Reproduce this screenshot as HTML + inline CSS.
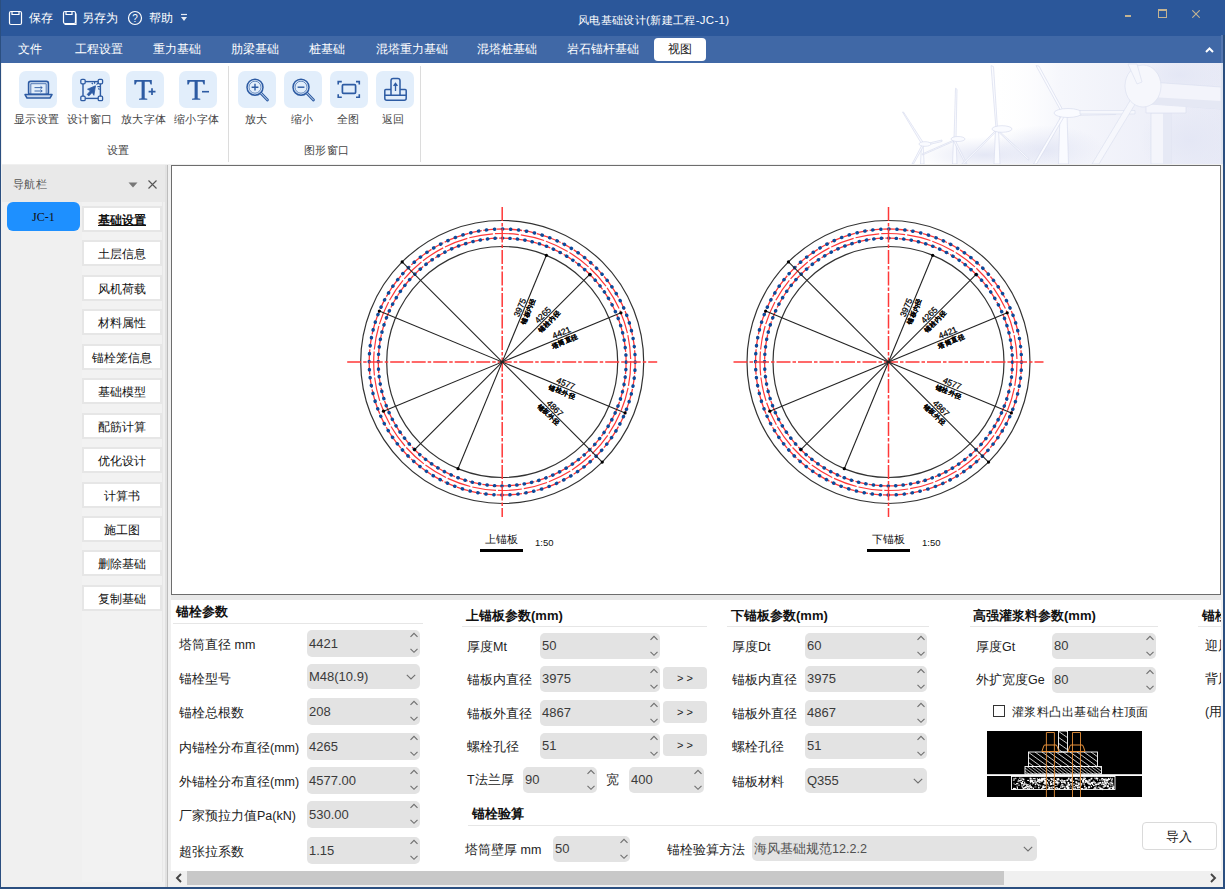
<!DOCTYPE html>
<html><head><meta charset="utf-8">
<style>
*{box-sizing:border-box;margin:0;padding:0}
html,body{width:1225px;height:889px;overflow:hidden;background:#f0f0f0;font-family:"Liberation Sans",sans-serif;position:relative}
.a{position:absolute}
.t{position:absolute;white-space:nowrap;line-height:1}
#title{left:0;top:0;width:1225px;height:36px;background:#2b579a}
#menu{left:0;top:36px;width:1225px;height:27px;background:#4068a6}
#ribbon{left:2px;top:63px;width:1221px;height:101px;background:#fff}
.mt{color:#fff;font-size:11.6px;top:43px}
.rbox{position:absolute;top:71px;width:38px;height:37px;background:#e2eefb;border-radius:7px}
.rl{position:absolute;top:114px;font-size:11.4px;letter-spacing:.3px;color:#444;white-space:nowrap;line-height:1}
#nav{left:2px;top:165px;width:166px;height:722px;background:#f0f0f0}
.nb{position:absolute;left:82px;width:80px;height:26px;background:#fff;border:2px solid #e6e6e6;font-size:12px;font-weight:500;color:#111;text-align:center;line-height:24px}
#canvas{left:171px;top:165px;width:1050px;height:430px;background:#fff;border:1px solid #6d6d6d}
#bottom{left:171px;top:600px;width:1050px;height:271px;background:#fff}
.lb{position:absolute;font-size:12.5px;color:#222;white-space:nowrap;line-height:1}
.hd{position:absolute;font-size:13px;font-weight:bold;color:#111;white-space:nowrap;line-height:1}
.sep{position:absolute;height:1px;background:#e6e6e6}
.sp{position:absolute;height:27px;background:#e3e3e3;border-radius:5px;font-size:13px;color:#3a3a3a;line-height:27px;padding-left:2px;white-space:nowrap}
.sp svg{position:absolute;right:5px;top:4px}
.btn{position:absolute;height:22px;background:#e3e3e3;border-radius:4px;font-size:11px;color:#222;text-align:center;line-height:22px}
</style></head><body>
<div id="title" class="a">
<svg class="a" style="left:8px;top:10px" width="16" height="16" viewBox="0 0 16 16"><rect x="1.5" y="1.5" width="12" height="13" rx="1.5" fill="none" stroke="#fff" stroke-width="1.2"/><path d="M4 1.5v3h7v-3" fill="none" stroke="#fff" stroke-width="1.2"/></svg>
<div class="t" style="left:29px;top:12px;font-size:12px;color:#fff">保存</div>
<svg class="a" style="left:62px;top:10px" width="16" height="16" viewBox="0 0 16 16"><rect x="1.5" y="1.5" width="12" height="12" rx="1.5" fill="none" stroke="#fff" stroke-width="1.2"/><path d="M4 1.5v3h6v-3M2.5 14.5h11.5v-11" fill="none" stroke="#fff" stroke-width="1.2"/></svg>
<div class="t" style="left:82px;top:12px;font-size:12px;color:#fff">另存为</div>
<svg class="a" style="left:127px;top:10px" width="16" height="16" viewBox="0 0 16 16"><circle cx="8" cy="8" r="6.5" fill="none" stroke="#fff" stroke-width="1.2"/><text x="8" y="11.5" font-size="10" text-anchor="middle" fill="#fff" font-family="Liberation Sans">?</text></svg>
<div class="t" style="left:149px;top:12px;font-size:12px;color:#fff">帮助</div>
<svg class="a" style="left:180px;top:13px" width="8" height="9" viewBox="0 0 8 9"><path d="M1 1.5h6" stroke="#e8ecf4" stroke-width="1.2"/><path d="M1 4h6L4 8z" fill="#e8ecf4"/></svg>
<div class="t" style="left:578px;top:15px;font-size:11.4px;letter-spacing:0.35px;color:#fff">风电基础设计(新建工程-JC-1)</div>
<div class="a" style="left:1125px;top:15px;width:6px;height:2px;background:#c4b391"></div>
<div class="a" style="left:1158px;top:9px;width:9px;height:9px;border:1px solid #c4b391;border-top-width:2px"></div>
<svg class="a" style="left:1192px;top:10px" width="8" height="8" viewBox="0 0 8 8"><path d="M0.3 0.3l7.4 7.4M7.7 0.3l-7.4 7.4" stroke="#c4b391" stroke-width="1.1"/></svg>
</div>
<div id="menu" class="a">
<div class="t mt" style="left:18px;top:7px">文件</div>
<div class="t mt" style="left:75px;top:7px">工程设置</div>
<div class="t mt" style="left:153px;top:7px">重力基础</div>
<div class="t mt" style="left:231px;top:7px">肋梁基础</div>
<div class="t mt" style="left:309px;top:7px">桩基础</div>
<div class="t mt" style="left:376px;top:7px">混塔重力基础</div>
<div class="t mt" style="left:477px;top:7px">混塔桩基础</div>
<div class="t mt" style="left:567px;top:7px">岩石锚杆基础</div>
<div class="a" style="left:654px;top:2px;width:52px;height:23px;background:#fff;border-radius:4px"></div>
<div class="t mt" style="left:668px;top:7px;color:#222">视图</div>
<svg class="a" style="left:1205px;top:11px" width="9" height="6" viewBox="0 0 9 6"><path d="M1 5l3.5-3.5 3.5 3.5" fill="none" stroke="#fff" stroke-width="2"/></svg>
</div>
<div id="ribbon" class="a"></div>
<svg class="a" style="left:880px;top:63px" width="343" height="101" viewBox="880 63 343 101">
 <defs>
  <linearGradient id="bg1" x1="0" y1="0" x2="1" y2="0"><stop offset="0" stop-color="#fff" stop-opacity="0"/><stop offset="0.3" stop-color="#f6f7fc"/><stop offset="1" stop-color="#e8eaf6"/></linearGradient>
  <radialGradient id="cl" cx="0.5" cy="0.5" r="0.5"><stop offset="0" stop-color="#e4e7f5"/><stop offset="1" stop-color="#e4e7f5" stop-opacity="0"/></radialGradient>
 </defs>
 <rect x="990" y="63" width="233" height="101" fill="url(#bg1)"/>
 <ellipse cx="1045" cy="150" rx="60" ry="25" fill="url(#cl)"/>
 <ellipse cx="1190" cy="140" rx="50" ry="40" fill="url(#cl)"/>
 <ellipse cx="1180" cy="75" rx="45" ry="22" fill="url(#cl)"/>
 <ellipse cx="985" cy="155" rx="70" ry="18" fill="url(#cl)"/>
 <g fill="#fafbff" stroke="#d9ddee" stroke-width="0.7">
  <path d="M921.5 144l1.6 0 1 20h-3.6z"/>
  <path d="M922 144.5L902.5 112l1 0 20 31z M922.5 144.5L942 140l0 1.5-19 4.5z M922 145L912 164h1.5l10-18z"/>
  <ellipse cx="925" cy="144" rx="6" ry="2.3"/>
  <path d="M953.5 139h2.5l1 25h-4.5z"/>
  <path d="M954 139L955.5 88.2l1.5 1-1 50z M954 140L922 154l.5 1 32-14z M955 140L967 164h-1.5l-12-23z"/>
  <ellipse cx="958" cy="139" rx="7" ry="2.5"/>
  <path d="M995.5 129h3l1.5 35h-6z"/>
  <path d="M996 129L991 65.6l2.5 1 4 62z M996 130L961.7 164h2l33-33z M998 130L1029 158.6l-.5 1.5-31-29z"/>
  <ellipse cx="1002" cy="129" rx="10" ry="3.3"/>
  <path d="M1060 113.5h7l1.5 50.5h-10z"/>
  <path d="M1062 113L1036 65.6l3 .5 25 46z M1064 112L1116.6 112l-1 2.5-51 1z M1062 115L1033.5 164h3l28-48z"/>
  <ellipse cx="1068" cy="113" rx="14" ry="4.5"/>
 </g>
 <g stroke="#d9ddee" stroke-width="0.6">
  <path d="M1080 110.5h55v3.5h-55z" fill="#f6f7fc"/>
  <path d="M1151 113h20v51h-20z" fill="#f4f5fb"/><path d="M1163 113h8v51h-8z" fill="#e6e9f5" stroke="none"/>
  <path d="M1146 101h40v12h-40z" fill="#f5f6fc"/>
  <path d="M1131 99l6 2-38 63h-7z" fill="#f6f7fc"/>
  <path d="M1150 82l71 5v22l-71-5z" fill="#f3f4fb"/>
  <path d="M1150 97l71 4v8l-71-5z" fill="#e5e8f4" stroke="none"/>
  <ellipse cx="1143" cy="86" rx="18" ry="21" fill="#f6f7fc"/>
  <path d="M1128 64l9 20 5-2-5-18z" fill="#f6f7fc"/>
 </g>
 <rect x="1221" y="63" width="2" height="101" fill="#dde3ef"/>
</svg>
<div class="rbox" style="left:19px"></div>
<div class="rbox" style="left:72px"></div>
<div class="rbox" style="left:126px"></div>
<div class="rbox" style="left:179px"></div>
<div class="rbox" style="left:238px"></div>
<div class="rbox" style="left:284px"></div>
<div class="rbox" style="left:330px"></div>
<div class="rbox" style="left:376px"></div>
<svg class="a" style="left:19px;top:71px" width="38" height="37" viewBox="0 0 38 37">
 <rect x="9.6" y="10.4" width="19.8" height="13" rx="2" fill="none" stroke="#2d5ba3" stroke-width="1.6"/>
 <path d="M11.8 23v-10.3h15.4v10.3" fill="none" stroke="#2d5ba3" stroke-width="0.8"/>
 <path d="M6 23.6h27l-2 3.4h-23z" fill="#c9d8ee" stroke="#2d5ba3" stroke-width="1.5" stroke-linejoin="round"/>
 <path d="M15.5 16.6h7.5M15.5 20h7.5" stroke="#2d5ba3" stroke-width="0.9"/>
 <path d="M21.5 15.3l1.8 1.3-1.8 1.3M21.5 18.7l1.8 1.3-1.8 1.3" fill="none" stroke="#2d5ba3" stroke-width="0.8"/>
</svg>
<svg class="a" style="left:72px;top:71px" width="38" height="37" viewBox="0 0 38 37">
 <rect x="11" y="10.6" width="17.4" height="16.8" fill="none" stroke="#2d5ba3" stroke-width="1.4"/>
 <g fill="#e2eefb" stroke="#2d5ba3" stroke-width="1.3"><rect x="8.8" y="8.4" width="4.4" height="4.4" rx="1.2"/><rect x="26.2" y="8.4" width="4.4" height="4.4" rx="1.2"/><rect x="8.8" y="25.2" width="4.4" height="4.4" rx="1.2"/><rect x="26.2" y="25.2" width="4.4" height="4.4" rx="1.2"/></g>
 <path d="M23.5 14.8L15.5 18.2l3 1.6-3.3 3.6 1.6 1.5 3.4-3.5 1.7 2.9z" fill="#2d5ba3" stroke="#2d5ba3" stroke-width="0.8" stroke-linejoin="round"/>
 <path d="M24.5 13.6l2-2M22.6 12.8v-2.6M25.4 15.6h2.6M20.8 13.2l-1-1.4M26.2 17.4l1.4 1" stroke="#2d5ba3" stroke-width="1.2"/>
</svg>
<svg class="a" style="left:126px;top:71px" width="38" height="37" viewBox="0 0 38 37">
 <path d="M8.3 9h17.5v4.6h-1.2l-1.1-2.8h-4.8v16.4l2.6.6v1h-8.3v-1l2.6-.6v-16.4h-4.8l-1.1 2.8h-1.4z" fill="#2d5ba3"/>
 <path d="M22.6 20.6h6.9M26 17.2v6.8" stroke="#2d5ba3" stroke-width="1.7"/>
</svg>
<svg class="a" style="left:179px;top:71px" width="38" height="37" viewBox="0 0 38 37">
 <path d="M8.3 9h17.5v4.6h-1.2l-1.1-2.8h-4.8v16.4l2.6.6v1h-8.3v-1l2.6-.6v-16.4h-4.8l-1.1 2.8h-1.4z" fill="#2d5ba3"/>
 <path d="M23 20.7h7" stroke="#2d5ba3" stroke-width="1.6"/>
</svg>
<svg class="a" style="left:238px;top:71px" width="38" height="37" viewBox="0 0 38 37">
 <circle cx="17" cy="16.2" r="8" fill="none" stroke="#2d5ba3" stroke-width="1.5"/>
 <circle cx="17" cy="16.2" r="6" fill="none" stroke="#2d5ba3" stroke-width="0.7"/>
 <path d="M23 22.2l6.5 6.8" stroke="#2d5ba3" stroke-width="2.8" stroke-linecap="round"/>
 <path d="M23 22.2l6.5 6.8" stroke="#e2eefb" stroke-width="0.9" stroke-linecap="round"/>
 <path d="M13.6 16.2h6.8M17 12.8v6.8" stroke="#2d5ba3" stroke-width="1.4"/>
</svg>
<svg class="a" style="left:284px;top:71px" width="38" height="37" viewBox="0 0 38 37">
 <circle cx="17" cy="16.2" r="8" fill="none" stroke="#2d5ba3" stroke-width="1.5"/>
 <circle cx="17" cy="16.2" r="6" fill="none" stroke="#2d5ba3" stroke-width="0.7"/>
 <path d="M23 22.2l6.5 6.8" stroke="#2d5ba3" stroke-width="2.8" stroke-linecap="round"/>
 <path d="M23 22.2l6.5 6.8" stroke="#e2eefb" stroke-width="0.9" stroke-linecap="round"/>
 <path d="M13.6 16.2h6.8" stroke="#2d5ba3" stroke-width="1.4"/>
</svg>
<svg class="a" style="left:330px;top:71px" width="38" height="37" viewBox="0 0 38 37">
 <path d="M8.2 13.6v-3h3.6M26 10.6h3.3v3M29.3 23.3v3h-3.3M11.8 26.3h-3.6v-3" fill="none" stroke="#2d5ba3" stroke-width="1.6"/>
 <rect x="12.4" y="13.6" width="13.2" height="8.8" rx="1.2" fill="none" stroke="#2d5ba3" stroke-width="1.7"/>
</svg>
<svg class="a" style="left:376px;top:71px" width="38" height="37" viewBox="0 0 38 37">
 <path d="M15 24v-14.2a2.2 2.2 0 0 1 2.2-2.2h4.6a2.2 2.2 0 0 1 2.2 2.2v14.2" fill="none" stroke="#2d5ba3" stroke-width="1.5"/>
 <path d="M15 18.5h-5.2a1 1 0 0 0-1 1v7.8a2 2 0 0 0 2 2h17.4a2 2 0 0 0 2-2v-7.8a1 1 0 0 0-1-1h-5.2M9 24.2h21" fill="none" stroke="#2d5ba3" stroke-width="1.5"/>
 <path d="M19.5 20v-7.5M17.6 14.8l1.9-2.5 1.9 2.5" fill="#2d5ba3" stroke="#2d5ba3" stroke-width="1.3"/>
</svg>
<div class="rl" style="left:14px">显示设置</div>
<div class="rl" style="left:67px">设计窗口</div>
<div class="rl" style="left:121px">放大字体</div>
<div class="rl" style="left:174px">缩小字体</div>
<div class="rl" style="left:245px">放大</div>
<div class="rl" style="left:291px">缩小</div>
<div class="rl" style="left:337px">全图</div>
<div class="rl" style="left:382px">返回</div>
<div class="rl" style="left:107px;top:145px">设置</div>
<div class="rl" style="left:304px;top:145px">图形窗口</div>
<div class="a" style="left:228px;top:66px;width:1px;height:96px;background:#dcdcdc"></div>
<div class="a" style="left:420px;top:66px;width:1px;height:96px;background:#dcdcdc"></div>
<div id="nav" class="a"></div>
<div class="a" style="left:2px;top:165px;width:166px;height:37px;background:#e9e9e9"></div>
<div class="t" style="left:13px;top:179px;font-size:11.4px;letter-spacing:.3px;color:#555">导航栏</div>
<svg class="a" style="left:128px;top:182px" width="10" height="6" viewBox="0 0 10 6"><path d="M0.5 0.5h9L5 5.5z" fill="#777"/></svg>
<svg class="a" style="left:148px;top:180px" width="9" height="9" viewBox="0 0 9 9"><path d="M0.5 0.5l8 8M8.5 0.5l-8 8" stroke="#555" stroke-width="1.1"/></svg>
<div class="a" style="left:82px;top:202px;width:81px;height:680px;background:#f2f2f2;border-right:1px solid #e8e8e8"></div>
<div class="a" style="left:7px;top:202px;width:73px;height:29px;background:#1e90ff;border-radius:6px"></div>
<div class="t" style="left:32px;top:211px;font-size:12px;color:#111;font-family:'Liberation Serif',serif">JC-1</div>
<div class="a" style="left:165px;top:165px;width:2px;height:722px;background:#e2e2e2"></div>
<div class="a" style="left:167px;top:165px;width:1px;height:722px;background:#bdbdbd"></div>
<div class="nb" style="top:206px;font-weight:bold;text-decoration:underline;">基础设置</div>
<div class="nb" style="top:240px;">土层信息</div>
<div class="nb" style="top:275px;">风机荷载</div>
<div class="nb" style="top:309px;">材料属性</div>
<div class="nb" style="top:344px;">锚栓笼信息</div>
<div class="nb" style="top:378px;">基础模型</div>
<div class="nb" style="top:413px;">配筋计算</div>
<div class="nb" style="top:447px;">优化设计</div>
<div class="nb" style="top:482px;">计算书</div>
<div class="nb" style="top:516px;">施工图</div>
<div class="nb" style="top:550px;">删除基础</div>
<div class="nb" style="top:585px;">复制基础</div>
<div id="canvas" class="a"></div>
<!--DRAW--><svg class="a" style="left:0;top:0" width="1225" height="889" viewBox="0 0 1225 889" font-family="Liberation Sans, sans-serif">
<g transform="translate(502.2 362)">
<circle r="141.5" fill="none" stroke="#333" stroke-width="1.2"/>
<circle r="115.5" fill="none" stroke="#333" stroke-width="1.2"/>
<circle r="133" fill="none" stroke="#ff3838" stroke-width="1.3" stroke-dasharray="12 1.5"/>
<circle r="128.5" fill="none" stroke="#ff3838" stroke-width="1.2" stroke-dasharray="24 2"/>
<circle r="123.9" fill="none" stroke="#ff3838" stroke-width="1.3" stroke-dasharray="12 1.5"/>
<circle r="133" fill="none" stroke="#0c4a9a" stroke-width="3.4" stroke-linecap="round" stroke-dasharray="0.3 7.7352"/>
<circle r="123.9" fill="none" stroke="#0c4a9a" stroke-width="3.4" stroke-linecap="round" stroke-dasharray="0.3 7.1854"/>
<path d="M-155 0H155M0 -155V155" stroke="#ff3838" stroke-width="1.5" stroke-dasharray="14 2 3.5 2"/>
<path d="M44.20 -106.71L-44.20 106.71" stroke="#222" stroke-width="1.1"/>
<circle cx="44.20" cy="-106.71" r="1.6" fill="#000"/><circle cx="-44.20" cy="106.71" r="1.6" fill="#000"/>
<path d="M87.61 -87.61L-87.61 87.61" stroke="#222" stroke-width="1.1"/>
<circle cx="87.61" cy="-87.61" r="1.6" fill="#000"/><circle cx="-87.61" cy="87.61" r="1.6" fill="#000"/>
<path d="M118.72 -49.17L-118.72 49.17" stroke="#222" stroke-width="1.1"/>
<circle cx="118.72" cy="-49.17" r="1.6" fill="#000"/><circle cx="-118.72" cy="49.17" r="1.6" fill="#000"/>
<path d="M122.88 50.90L-122.88 -50.90" stroke="#222" stroke-width="1.1"/>
<circle cx="122.88" cy="50.90" r="1.6" fill="#000"/><circle cx="-122.88" cy="-50.90" r="1.6" fill="#000"/>
<path d="M100.06 100.06L-100.06 -100.06" stroke="#222" stroke-width="1.1"/>
<circle cx="100.06" cy="100.06" r="1.6" fill="#000"/><circle cx="-100.06" cy="-100.06" r="1.6" fill="#000"/>
<g transform="rotate(-67.5)"><text x="57" y="-1.5" font-size="8.6" text-anchor="middle" fill="#000" stroke="#000" stroke-width="0.25">3975</text><text x="57" y="7" font-size="6.6" font-weight="bold" text-anchor="middle" fill="#000" stroke="#000" stroke-width="0.1">锚板内径</text></g>
<g transform="rotate(-45)"><text x="62" y="-1.5" font-size="8.6" text-anchor="middle" fill="#000" stroke="#000" stroke-width="0.25">4265</text><text x="62" y="7" font-size="6.6" font-weight="bold" text-anchor="middle" fill="#000" stroke="#000" stroke-width="0.1">锚栓内径</text></g>
<g transform="rotate(-22.5)"><text x="66" y="-1.5" font-size="8.6" text-anchor="middle" fill="#000" stroke="#000" stroke-width="0.25">4421</text><text x="66" y="7" font-size="6.6" font-weight="bold" text-anchor="middle" fill="#000" stroke="#000" stroke-width="0.1">塔筒直径</text></g>
<g transform="rotate(22.5)"><text x="67" y="-1.5" font-size="8.6" text-anchor="middle" fill="#000" stroke="#000" stroke-width="0.25">4577</text><text x="67" y="7" font-size="6.6" font-weight="bold" text-anchor="middle" fill="#000" stroke="#000" stroke-width="0.1">锚栓外径</text></g>
<g transform="rotate(45)"><text x="70" y="-1.5" font-size="8.6" text-anchor="middle" fill="#000" stroke="#000" stroke-width="0.25">4867</text><text x="70" y="7" font-size="6.6" font-weight="bold" text-anchor="middle" fill="#000" stroke="#000" stroke-width="0.1">锚板外径</text></g>
</g>
<g transform="translate(888.5 362)">
<circle r="141.5" fill="none" stroke="#333" stroke-width="1.2"/>
<circle r="115.5" fill="none" stroke="#333" stroke-width="1.2"/>
<circle r="133" fill="none" stroke="#ff3838" stroke-width="1.3" stroke-dasharray="12 1.5"/>
<circle r="128.5" fill="none" stroke="#ff3838" stroke-width="1.2" stroke-dasharray="24 2"/>
<circle r="123.9" fill="none" stroke="#ff3838" stroke-width="1.3" stroke-dasharray="12 1.5"/>
<circle r="133" fill="none" stroke="#0c4a9a" stroke-width="3.4" stroke-linecap="round" stroke-dasharray="0.3 7.7352"/>
<circle r="123.9" fill="none" stroke="#0c4a9a" stroke-width="3.4" stroke-linecap="round" stroke-dasharray="0.3 7.1854"/>
<path d="M-155 0H155M0 -155V155" stroke="#ff3838" stroke-width="1.5" stroke-dasharray="14 2 3.5 2"/>
<path d="M44.20 -106.71L-44.20 106.71" stroke="#222" stroke-width="1.1"/>
<circle cx="44.20" cy="-106.71" r="1.6" fill="#000"/><circle cx="-44.20" cy="106.71" r="1.6" fill="#000"/>
<path d="M87.61 -87.61L-87.61 87.61" stroke="#222" stroke-width="1.1"/>
<circle cx="87.61" cy="-87.61" r="1.6" fill="#000"/><circle cx="-87.61" cy="87.61" r="1.6" fill="#000"/>
<path d="M118.72 -49.17L-118.72 49.17" stroke="#222" stroke-width="1.1"/>
<circle cx="118.72" cy="-49.17" r="1.6" fill="#000"/><circle cx="-118.72" cy="49.17" r="1.6" fill="#000"/>
<path d="M122.88 50.90L-122.88 -50.90" stroke="#222" stroke-width="1.1"/>
<circle cx="122.88" cy="50.90" r="1.6" fill="#000"/><circle cx="-122.88" cy="-50.90" r="1.6" fill="#000"/>
<path d="M100.06 100.06L-100.06 -100.06" stroke="#222" stroke-width="1.1"/>
<circle cx="100.06" cy="100.06" r="1.6" fill="#000"/><circle cx="-100.06" cy="-100.06" r="1.6" fill="#000"/>
<g transform="rotate(-67.5)"><text x="57" y="-1.5" font-size="8.6" text-anchor="middle" fill="#000" stroke="#000" stroke-width="0.25">3975</text><text x="57" y="7" font-size="6.6" font-weight="bold" text-anchor="middle" fill="#000" stroke="#000" stroke-width="0.1">锚板内径</text></g>
<g transform="rotate(-45)"><text x="62" y="-1.5" font-size="8.6" text-anchor="middle" fill="#000" stroke="#000" stroke-width="0.25">4265</text><text x="62" y="7" font-size="6.6" font-weight="bold" text-anchor="middle" fill="#000" stroke="#000" stroke-width="0.1">锚栓内径</text></g>
<g transform="rotate(-22.5)"><text x="66" y="-1.5" font-size="8.6" text-anchor="middle" fill="#000" stroke="#000" stroke-width="0.25">4421</text><text x="66" y="7" font-size="6.6" font-weight="bold" text-anchor="middle" fill="#000" stroke="#000" stroke-width="0.1">塔筒直径</text></g>
<g transform="rotate(22.5)"><text x="67" y="-1.5" font-size="8.6" text-anchor="middle" fill="#000" stroke="#000" stroke-width="0.25">4577</text><text x="67" y="7" font-size="6.6" font-weight="bold" text-anchor="middle" fill="#000" stroke="#000" stroke-width="0.1">锚栓外径</text></g>
<g transform="rotate(45)"><text x="70" y="-1.5" font-size="8.6" text-anchor="middle" fill="#000" stroke="#000" stroke-width="0.25">4867</text><text x="70" y="7" font-size="6.6" font-weight="bold" text-anchor="middle" fill="#000" stroke="#000" stroke-width="0.1">锚板外径</text></g>
</g>
<text x="485" y="543" font-size="11.2" fill="#111">上锚板</text>
<rect x="480" y="549" width="43" height="3" fill="#000"/>
<text x="535" y="546" font-size="9.5" fill="#111">1:50</text>
<text x="872" y="543" font-size="11.2" fill="#111">下锚板</text>
<rect x="867" y="549" width="43" height="3" fill="#000"/>
<text x="922" y="546" font-size="9.5" fill="#111">1:50</text>
</svg><!--/DRAW-->
<!--BOTTOM--><div id="bottom" class="a"></div>
<div class="a" style="left:171px;top:595px;width:1050px;height:5px;background:#e8e8e8"></div>
<div class="hd" style="left:176px;top:604.5px">锚栓参数</div>
<div class="sep" style="left:173px;top:623px;width:250px"></div>
<div class="lb" style="left:179px;top:638.5px">塔筒直径 mm</div>
<div class="sp" style="left:307px;top:630px;width:113px;height:27px;line-height:27px">4421<svg style="position:absolute;right:2px;top:2px" width="8" height="22" viewBox="0 0 8 22"><path d="M0.5 4.9l3.5-3.5 3.5 3.5M0.5 16.8l3.5 3.5 3.5-3.5" fill="none" stroke="#707070" stroke-width="1.15"/></svg></div>
<div class="lb" style="left:179px;top:672.5px">锚栓型号</div>
<div class="sp" style="left:307px;top:664px;width:113px;height:25px;line-height:25px">M48(10.9)<svg style="position:absolute;right:4px;top:10px" width="10" height="6" viewBox="0 0 10 6"><path d="M0.8 0.8l4.2 4.2 4.2-4.2" fill="none" stroke="#707070" stroke-width="1.1"/></svg></div>
<div class="lb" style="left:179px;top:706.5px">锚栓总根数</div>
<div class="sp" style="left:307px;top:698px;width:113px;height:27px;line-height:27px">208<svg style="position:absolute;right:2px;top:2px" width="8" height="22" viewBox="0 0 8 22"><path d="M0.5 4.9l3.5-3.5 3.5 3.5M0.5 16.8l3.5 3.5 3.5-3.5" fill="none" stroke="#707070" stroke-width="1.15"/></svg></div>
<div class="lb" style="left:179px;top:741.5px">内锚栓分布直径(mm)</div>
<div class="sp" style="left:307px;top:733px;width:113px;height:27px;line-height:27px">4265<svg style="position:absolute;right:2px;top:2px" width="8" height="22" viewBox="0 0 8 22"><path d="M0.5 4.9l3.5-3.5 3.5 3.5M0.5 16.8l3.5 3.5 3.5-3.5" fill="none" stroke="#707070" stroke-width="1.15"/></svg></div>
<div class="lb" style="left:179px;top:775.5px">外锚栓分布直径(mm)</div>
<div class="sp" style="left:307px;top:767px;width:113px;height:27px;line-height:27px">4577.00<svg style="position:absolute;right:2px;top:2px" width="8" height="22" viewBox="0 0 8 22"><path d="M0.5 4.9l3.5-3.5 3.5 3.5M0.5 16.8l3.5 3.5 3.5-3.5" fill="none" stroke="#707070" stroke-width="1.15"/></svg></div>
<div class="lb" style="left:179px;top:809.5px">厂家预拉力值Pa(kN)</div>
<div class="sp" style="left:307px;top:801px;width:113px;height:27px;line-height:27px">530.00<svg style="position:absolute;right:2px;top:2px" width="8" height="22" viewBox="0 0 8 22"><path d="M0.5 4.9l3.5-3.5 3.5 3.5M0.5 16.8l3.5 3.5 3.5-3.5" fill="none" stroke="#707070" stroke-width="1.15"/></svg></div>
<div class="lb" style="left:179px;top:845.5px">超张拉系数</div>
<div class="sp" style="left:307px;top:837px;width:113px;height:27px;line-height:27px">1.15<svg style="position:absolute;right:2px;top:2px" width="8" height="22" viewBox="0 0 8 22"><path d="M0.5 4.9l3.5-3.5 3.5 3.5M0.5 16.8l3.5 3.5 3.5-3.5" fill="none" stroke="#707070" stroke-width="1.15"/></svg></div>
<div class="hd" style="left:466px;top:608.5px">上锚板参数(mm)</div>
<div class="sep" style="left:462px;top:626px;width:245px"></div>
<div class="lb" style="left:467px;top:640.5px">厚度Mt</div>
<div class="sp" style="left:540px;top:633px;width:120px;height:26px;line-height:26px">50<svg style="position:absolute;right:2px;top:2px" width="8" height="22" viewBox="0 0 8 22"><path d="M0.5 4.9l3.5-3.5 3.5 3.5M0.5 16.8l3.5 3.5 3.5-3.5" fill="none" stroke="#707070" stroke-width="1.15"/></svg></div>
<div class="lb" style="left:467px;top:673.5px">锚板内直径</div>
<div class="sp" style="left:540px;top:666px;width:120px;height:26px;line-height:26px">3975<svg style="position:absolute;right:2px;top:2px" width="8" height="22" viewBox="0 0 8 22"><path d="M0.5 4.9l3.5-3.5 3.5 3.5M0.5 16.8l3.5 3.5 3.5-3.5" fill="none" stroke="#707070" stroke-width="1.15"/></svg></div>
<div class="btn" style="left:663px;top:667px;width:44px;height:22px;line-height:22px">&gt; &gt;</div>
<div class="lb" style="left:467px;top:707.5px">锚板外直径</div>
<div class="sp" style="left:540px;top:700px;width:120px;height:26px;line-height:26px">4867<svg style="position:absolute;right:2px;top:2px" width="8" height="22" viewBox="0 0 8 22"><path d="M0.5 4.9l3.5-3.5 3.5 3.5M0.5 16.8l3.5 3.5 3.5-3.5" fill="none" stroke="#707070" stroke-width="1.15"/></svg></div>
<div class="btn" style="left:663px;top:701px;width:44px;height:22px;line-height:22px">&gt; &gt;</div>
<div class="lb" style="left:467px;top:740.5px">螺栓孔径</div>
<div class="sp" style="left:540px;top:733px;width:120px;height:26px;line-height:26px">51<svg style="position:absolute;right:2px;top:2px" width="8" height="22" viewBox="0 0 8 22"><path d="M0.5 4.9l3.5-3.5 3.5 3.5M0.5 16.8l3.5 3.5 3.5-3.5" fill="none" stroke="#707070" stroke-width="1.15"/></svg></div>
<div class="btn" style="left:663px;top:734px;width:44px;height:22px;line-height:22px">&gt; &gt;</div>
<div class="lb" style="left:467px;top:773.5px">T法兰厚</div>
<div class="sp" style="left:523px;top:767px;width:74px;height:26px;line-height:26px">90<svg style="position:absolute;right:2px;top:2px" width="8" height="22" viewBox="0 0 8 22"><path d="M0.5 4.9l3.5-3.5 3.5 3.5M0.5 16.8l3.5 3.5 3.5-3.5" fill="none" stroke="#707070" stroke-width="1.15"/></svg></div>
<div class="lb" style="left:606px;top:773.5px">宽</div>
<div class="sp" style="left:629px;top:767px;width:75px;height:26px;line-height:26px">400<svg style="position:absolute;right:2px;top:2px" width="8" height="22" viewBox="0 0 8 22"><path d="M0.5 4.9l3.5-3.5 3.5 3.5M0.5 16.8l3.5 3.5 3.5-3.5" fill="none" stroke="#707070" stroke-width="1.15"/></svg></div>
<div class="hd" style="left:472px;top:806.5px">锚栓验算</div>
<div class="sep" style="left:468px;top:825px;width:572px"></div>
<div class="lb" style="left:465px;top:843.5px">塔筒壁厚 mm</div>
<div class="sp" style="left:553px;top:836px;width:77px;height:26px;line-height:26px">50<svg style="position:absolute;right:2px;top:2px" width="8" height="22" viewBox="0 0 8 22"><path d="M0.5 4.9l3.5-3.5 3.5 3.5M0.5 16.8l3.5 3.5 3.5-3.5" fill="none" stroke="#707070" stroke-width="1.15"/></svg></div>
<div class="lb" style="left:667px;top:843.5px">锚栓验算方法</div>
<div class="sp" style="left:752px;top:836px;width:285px;height:25px;line-height:25px"><span style="font-size:12.6px;color:#505050">海风基础规范12.2.2</span><svg style="position:absolute;right:4px;top:10px" width="10" height="6" viewBox="0 0 10 6"><path d="M0.8 0.8l4.2 4.2 4.2-4.2" fill="none" stroke="#707070" stroke-width="1.1"/></svg></div>
<div class="hd" style="left:731px;top:608.5px">下锚板参数(mm)</div>
<div class="sep" style="left:727px;top:626px;width:202px"></div>
<div class="lb" style="left:732px;top:640.5px">厚度Dt</div>
<div class="sp" style="left:805px;top:633px;width:122px;height:26px;line-height:26px">60<svg style="position:absolute;right:2px;top:2px" width="8" height="22" viewBox="0 0 8 22"><path d="M0.5 4.9l3.5-3.5 3.5 3.5M0.5 16.8l3.5 3.5 3.5-3.5" fill="none" stroke="#707070" stroke-width="1.15"/></svg></div>
<div class="lb" style="left:732px;top:673.5px">锚板内直径</div>
<div class="sp" style="left:805px;top:666px;width:122px;height:26px;line-height:26px">3975<svg style="position:absolute;right:2px;top:2px" width="8" height="22" viewBox="0 0 8 22"><path d="M0.5 4.9l3.5-3.5 3.5 3.5M0.5 16.8l3.5 3.5 3.5-3.5" fill="none" stroke="#707070" stroke-width="1.15"/></svg></div>
<div class="lb" style="left:732px;top:707.5px">锚板外直径</div>
<div class="sp" style="left:805px;top:700px;width:122px;height:26px;line-height:26px">4867<svg style="position:absolute;right:2px;top:2px" width="8" height="22" viewBox="0 0 8 22"><path d="M0.5 4.9l3.5-3.5 3.5 3.5M0.5 16.8l3.5 3.5 3.5-3.5" fill="none" stroke="#707070" stroke-width="1.15"/></svg></div>
<div class="lb" style="left:732px;top:740.5px">螺栓孔径</div>
<div class="sp" style="left:805px;top:733px;width:122px;height:26px;line-height:26px">51<svg style="position:absolute;right:2px;top:2px" width="8" height="22" viewBox="0 0 8 22"><path d="M0.5 4.9l3.5-3.5 3.5 3.5M0.5 16.8l3.5 3.5 3.5-3.5" fill="none" stroke="#707070" stroke-width="1.15"/></svg></div>
<div class="lb" style="left:732px;top:775.5px">锚板材料</div>
<div class="sp" style="left:805px;top:768px;width:122px;height:25px;line-height:25px">Q355<svg style="position:absolute;right:4px;top:10px" width="10" height="6" viewBox="0 0 10 6"><path d="M0.8 0.8l4.2 4.2 4.2-4.2" fill="none" stroke="#707070" stroke-width="1.1"/></svg></div>
<div class="hd" style="left:973px;top:608.5px">高强灌浆料参数(mm)</div>
<div class="sep" style="left:970px;top:626px;width:188px"></div>
<div class="lb" style="left:976px;top:640.5px">厚度Gt</div>
<div class="sp" style="left:1052px;top:633px;width:104px;height:26px;line-height:26px">80<svg style="position:absolute;right:2px;top:2px" width="8" height="22" viewBox="0 0 8 22"><path d="M0.5 4.9l3.5-3.5 3.5 3.5M0.5 16.8l3.5 3.5 3.5-3.5" fill="none" stroke="#707070" stroke-width="1.15"/></svg></div>
<div class="lb" style="left:976px;top:673.5px">外扩宽度Ge</div>
<div class="sp" style="left:1052px;top:667px;width:104px;height:26px;line-height:26px">80<svg style="position:absolute;right:2px;top:2px" width="8" height="22" viewBox="0 0 8 22"><path d="M0.5 4.9l3.5-3.5 3.5 3.5M0.5 16.8l3.5 3.5 3.5-3.5" fill="none" stroke="#707070" stroke-width="1.15"/></svg></div>
<div class="a" style="left:993px;top:705px;width:12px;height:12px;border:1px solid #333;background:#fff"></div>
<div class="lb" style="left:1012px;top:705.5px;font-size:12px;letter-spacing:.45px">灌浆料凸出基础台柱顶面</div>
<svg class="a" style="left:987px;top:731px" width="155" height="66" viewBox="0 0 155 66">
<rect x="0" y="0" width="155" height="66" fill="#000"/>
<defs><clipPath id="c1"><rect x="41.5" y="21" width="69" height="14.5"/></clipPath><clipPath id="c2"><rect x="38" y="35.5" width="76.5" height="7.5"/></clipPath><clipPath id="c3"><rect x="71.5" y="0" width="9" height="21"/></clipPath></defs>
<rect x="0" y="43.2" width="155" height="1.8" fill="#fff"/>
<rect x="24.5" y="45.5" width="103.5" height="13" fill="none" stroke="#fff" stroke-width="0.9"/>
<g fill="#fff"><rect x="49.7" y="52.5" width="1.2" height="1.3"/><rect x="89.0" y="47.2" width="0.6" height="1.6"/><rect x="51.8" y="49.1" width="2.2" height="1.2"/><rect x="110.4" y="51.7" width="1.6" height="0.8"/><rect x="89.9" y="56.0" width="1.4" height="1.5"/><rect x="93.6" y="47.2" width="1.8" height="1.3"/><rect x="56.1" y="46.8" width="2.0" height="1.2"/><rect x="98.5" y="56.2" width="1.7" height="1.7"/><rect x="65.6" y="55.3" width="1.3" height="1.7"/><rect x="114.7" y="47.6" width="0.8" height="0.9"/><rect x="123.5" y="51.3" width="1.6" height="1.0"/><rect x="77.0" y="50.7" width="1.2" height="1.3"/><rect x="84.8" y="56.4" width="1.7" height="1.7"/><rect x="112.4" y="57.4" width="1.7" height="0.8"/><rect x="112.9" y="57.1" width="2.0" height="1.3"/><rect x="98.0" y="48.8" width="1.9" height="1.3"/><rect x="54.4" y="47.2" width="2.0" height="1.8"/><rect x="34.5" y="55.3" width="1.3" height="0.8"/><rect x="55.3" y="55.0" width="2.0" height="0.7"/><rect x="87.9" y="47.0" width="1.7" height="1.0"/><rect x="114.9" y="57.3" width="1.4" height="1.8"/><rect x="56.9" y="47.3" width="1.6" height="0.6"/><rect x="45.5" y="51.0" width="1.6" height="0.8"/><rect x="29.8" y="56.0" width="1.1" height="1.8"/><rect x="116.5" y="50.7" width="1.3" height="1.2"/><rect x="90.9" y="53.1" width="1.5" height="1.3"/><rect x="121.0" y="52.1" width="1.3" height="1.5"/><rect x="49.6" y="49.8" width="2.2" height="1.2"/><rect x="81.2" y="46.6" width="1.3" height="1.3"/><rect x="27.5" y="53.3" width="1.6" height="0.7"/><rect x="89.2" y="51.6" width="1.7" height="1.0"/><rect x="97.3" y="54.6" width="0.6" height="0.7"/><rect x="94.1" y="57.1" width="1.0" height="1.1"/><rect x="85.7" y="50.0" width="1.2" height="1.0"/><rect x="63.0" y="53.1" width="1.1" height="1.1"/><rect x="103.9" y="46.8" width="1.5" height="1.5"/><rect x="57.0" y="48.9" width="1.9" height="0.9"/><rect x="44.5" y="51.3" width="1.7" height="0.7"/><rect x="58.2" y="50.2" width="1.9" height="1.1"/><rect x="112.3" y="48.4" width="1.1" height="1.4"/><rect x="115.3" y="51.5" width="1.0" height="0.7"/><rect x="79.3" y="48.6" width="1.9" height="1.6"/><rect x="44.1" y="49.6" width="1.9" height="1.4"/><rect x="107.3" y="50.3" width="0.8" height="1.0"/><rect x="106.1" y="49.5" width="1.2" height="1.1"/><rect x="68.1" y="51.0" width="2.1" height="0.8"/><rect x="26.0" y="56.9" width="2.0" height="1.8"/><rect x="69.6" y="57.0" width="2.1" height="0.9"/><rect x="101.2" y="55.7" width="1.7" height="1.2"/><rect x="54.8" y="50.3" width="1.0" height="0.7"/><rect x="85.3" y="49.7" width="1.9" height="0.7"/><rect x="117.2" y="54.1" width="2.1" height="1.7"/><rect x="116.8" y="52.8" width="0.6" height="1.5"/><rect x="42.9" y="49.8" width="1.7" height="1.2"/><rect x="67.5" y="56.8" width="1.6" height="1.0"/><rect x="51.1" y="56.0" width="1.4" height="1.5"/><rect x="61.2" y="48.7" width="1.5" height="1.6"/><rect x="42.9" y="55.2" width="2.1" height="1.6"/><rect x="109.1" y="46.6" width="1.6" height="1.6"/><rect x="30.6" y="49.5" width="1.0" height="1.2"/><rect x="68.4" y="51.7" width="1.8" height="0.6"/><rect x="31.1" y="47.9" width="0.8" height="0.7"/><rect x="124.4" y="55.9" width="0.7" height="1.2"/><rect x="57.6" y="50.0" width="1.2" height="1.4"/><rect x="85.0" y="50.5" width="0.9" height="1.0"/><rect x="38.1" y="52.6" width="1.7" height="1.1"/><rect x="33.6" y="48.5" width="1.2" height="1.3"/><rect x="104.9" y="50.7" width="1.9" height="1.3"/><rect x="69.3" y="50.6" width="1.4" height="1.4"/><rect x="68.2" y="54.1" width="1.3" height="0.9"/><rect x="79.9" y="54.1" width="0.7" height="1.1"/><rect x="68.7" y="56.2" width="2.1" height="1.0"/><rect x="116.6" y="55.2" width="1.0" height="1.2"/><rect x="38.0" y="55.4" width="1.7" height="1.7"/><rect x="105.9" y="53.8" width="1.8" height="1.3"/><rect x="36.0" y="53.0" width="0.6" height="0.8"/><rect x="104.1" y="47.0" width="0.7" height="0.7"/><rect x="114.9" y="48.5" width="0.6" height="1.6"/><rect x="37.8" y="55.8" width="1.7" height="1.6"/><rect x="122.2" y="52.9" width="1.9" height="0.6"/><rect x="103.4" y="52.1" width="1.7" height="0.7"/><rect x="101.5" y="56.8" width="0.7" height="1.0"/><rect x="82.7" y="55.6" width="1.0" height="0.8"/><rect x="50.9" y="53.3" width="1.8" height="1.1"/><rect x="62.8" y="50.9" width="1.2" height="1.1"/><rect x="34.0" y="52.0" width="2.2" height="1.1"/><rect x="101.4" y="48.3" width="1.7" height="1.5"/><rect x="93.9" y="52.2" width="1.4" height="1.4"/><rect x="116.6" y="48.1" width="0.8" height="1.5"/><rect x="118.5" y="52.2" width="1.3" height="1.5"/><rect x="44.4" y="49.4" width="0.9" height="1.3"/><rect x="57.5" y="49.1" width="1.7" height="1.7"/><rect x="55.5" y="54.3" width="1.3" height="1.6"/><rect x="84.8" y="49.4" width="0.9" height="0.6"/><rect x="74.2" y="50.7" width="0.9" height="1.0"/><rect x="58.2" y="55.0" width="0.8" height="1.8"/><rect x="74.2" y="53.1" width="1.3" height="1.6"/><rect x="108.9" y="52.6" width="1.4" height="1.5"/><rect x="112.4" y="50.9" width="1.8" height="1.8"/><rect x="72.9" y="49.0" width="1.0" height="1.5"/><rect x="94.0" y="57.0" width="2.0" height="0.9"/><rect x="44.7" y="49.3" width="0.9" height="1.4"/><rect x="112.6" y="56.4" width="1.0" height="1.6"/><rect x="57.3" y="51.2" width="1.8" height="0.7"/><rect x="34.9" y="55.7" width="1.1" height="1.0"/><rect x="84.4" y="53.9" width="0.6" height="1.0"/><rect x="69.8" y="51.8" width="0.9" height="1.3"/><rect x="122.5" y="50.8" width="1.5" height="0.7"/><rect x="53.4" y="53.8" width="0.8" height="1.7"/><rect x="117.7" y="47.6" width="2.1" height="1.0"/><rect x="103.9" y="54.8" width="1.1" height="1.4"/><rect x="91.9" y="55.4" width="1.0" height="1.5"/><rect x="123.1" y="53.9" width="1.5" height="0.7"/><rect x="75.6" y="50.4" width="1.7" height="1.4"/><rect x="83.0" y="48.5" width="1.6" height="1.4"/><rect x="43.7" y="56.3" width="1.6" height="0.7"/><rect x="120.1" y="48.1" width="1.1" height="1.5"/><rect x="86.1" y="52.6" width="1.6" height="1.1"/><rect x="57.2" y="48.4" width="0.7" height="1.5"/><rect x="102.1" y="52.5" width="1.8" height="1.0"/><rect x="52.5" y="50.7" width="2.0" height="0.7"/><rect x="76.7" y="49.2" width="1.8" height="1.0"/><rect x="59.3" y="50.9" width="1.5" height="1.5"/><rect x="61.3" y="55.8" width="0.8" height="0.9"/><rect x="35.6" y="47.7" width="1.8" height="1.5"/><rect x="44.3" y="48.6" width="1.3" height="1.5"/><rect x="108.3" y="54.7" width="1.5" height="0.8"/><rect x="65.9" y="48.6" width="1.4" height="1.3"/><rect x="46.0" y="49.3" width="1.9" height="0.6"/><rect x="107.0" y="56.3" width="2.1" height="1.1"/><rect x="81.6" y="52.9" width="1.6" height="1.8"/><rect x="95.2" y="49.8" width="2.0" height="1.2"/><rect x="86.5" y="54.5" width="0.6" height="1.5"/><rect x="92.7" y="51.9" width="1.4" height="1.2"/><rect x="45.1" y="52.3" width="0.7" height="1.2"/><rect x="91.1" y="51.4" width="1.5" height="1.8"/><rect x="116.0" y="48.0" width="1.9" height="1.3"/><rect x="30.6" y="50.5" width="1.0" height="0.7"/><rect x="80.2" y="56.7" width="1.1" height="1.6"/><rect x="96.0" y="48.0" width="2.0" height="1.3"/><rect x="119.6" y="54.4" width="1.8" height="1.0"/><rect x="107.4" y="56.7" width="2.0" height="1.1"/><rect x="102.3" y="51.8" width="0.8" height="0.7"/><rect x="33.4" y="48.7" width="0.9" height="1.2"/><rect x="96.5" y="52.4" width="1.3" height="1.4"/><rect x="56.4" y="51.6" width="1.8" height="1.1"/><rect x="43.8" y="56.4" width="1.8" height="1.0"/><rect x="63.2" y="52.3" width="1.6" height="0.9"/><rect x="25.8" y="48.8" width="1.9" height="0.8"/><rect x="72.2" y="48.6" width="0.9" height="0.8"/><rect x="66.5" y="48.4" width="0.6" height="0.7"/><rect x="42.6" y="51.9" width="0.7" height="0.6"/><rect x="71.0" y="51.0" width="1.7" height="0.7"/><rect x="66.4" y="50.9" width="0.6" height="1.8"/><rect x="47.7" y="47.5" width="1.4" height="0.8"/><rect x="88.7" y="50.3" width="0.8" height="0.7"/><rect x="99.4" y="49.5" width="1.9" height="1.2"/><rect x="120.2" y="49.8" width="1.0" height="0.9"/><rect x="108.2" y="53.4" width="1.2" height="0.7"/><rect x="94.8" y="57.2" width="1.5" height="0.6"/><rect x="28.6" y="47.5" width="0.9" height="0.6"/><rect x="31.0" y="53.7" width="2.0" height="0.8"/><rect x="124.3" y="51.7" width="1.9" height="1.7"/><rect x="120.9" y="46.9" width="1.1" height="1.3"/><rect x="121.6" y="47.5" width="1.1" height="1.6"/><rect x="37.1" y="50.8" width="1.1" height="1.4"/><rect x="119.7" y="48.4" width="1.8" height="1.5"/><rect x="110.3" y="52.6" width="2.1" height="1.0"/><rect x="67.6" y="49.0" width="1.8" height="1.2"/><rect x="52.8" y="48.4" width="1.8" height="1.3"/><rect x="97.6" y="50.8" width="1.4" height="0.8"/><rect x="97.6" y="46.8" width="1.3" height="1.5"/><rect x="94.2" y="47.6" width="1.0" height="1.6"/><rect x="90.7" y="56.2" width="2.0" height="1.1"/><rect x="116.5" y="54.6" width="1.1" height="1.0"/><rect x="32.8" y="50.9" width="2.1" height="0.7"/><rect x="83.2" y="47.7" width="0.7" height="1.4"/><rect x="49.9" y="47.0" width="0.8" height="1.4"/><rect x="84.9" y="46.6" width="1.0" height="1.8"/><rect x="47.8" y="52.7" width="1.3" height="1.5"/><rect x="86.8" y="55.2" width="1.5" height="0.8"/><rect x="43.5" y="47.4" width="1.9" height="0.7"/><rect x="27.9" y="57.1" width="0.9" height="1.7"/><rect x="34.2" y="51.6" width="1.0" height="1.6"/><rect x="88.0" y="53.6" width="1.8" height="1.6"/><rect x="60.6" y="53.1" width="1.3" height="0.7"/><rect x="110.3" y="53.0" width="1.9" height="0.8"/><rect x="80.2" y="51.6" width="1.8" height="0.7"/><rect x="60.6" y="51.8" width="0.7" height="1.3"/><rect x="100.1" y="51.2" width="1.6" height="1.3"/><rect x="47.2" y="50.4" width="2.2" height="1.0"/><rect x="69.2" y="47.4" width="0.9" height="0.8"/><rect x="120.0" y="54.5" width="2.0" height="1.8"/><rect x="87.6" y="56.7" width="1.5" height="1.1"/><rect x="121.7" y="56.4" width="2.1" height="1.2"/><rect x="104.0" y="51.0" width="2.2" height="1.7"/><rect x="55.1" y="56.8" width="0.9" height="0.7"/><rect x="98.8" y="49.7" width="1.4" height="1.4"/><rect x="29.6" y="54.7" width="1.0" height="1.1"/><rect x="60.5" y="54.7" width="1.8" height="0.9"/><rect x="36.0" y="49.8" width="1.3" height="0.7"/><rect x="41.1" y="54.9" width="1.7" height="1.8"/><rect x="124.9" y="56.1" width="1.2" height="0.8"/><rect x="57.2" y="51.6" width="1.4" height="1.3"/><rect x="62.0" y="55.9" width="1.1" height="1.2"/><rect x="115.5" y="55.4" width="1.1" height="0.9"/><rect x="107.4" y="46.6" width="0.8" height="1.2"/><rect x="79.9" y="48.3" width="0.7" height="0.8"/><rect x="103.7" y="51.6" width="2.2" height="1.5"/><rect x="124.9" y="46.9" width="0.9" height="0.6"/><rect x="69.4" y="50.2" width="0.7" height="1.3"/><rect x="35.0" y="49.9" width="1.0" height="1.6"/><rect x="67.9" y="49.4" width="0.7" height="1.1"/><rect x="89.2" y="53.9" width="2.1" height="1.6"/><rect x="50.6" y="48.0" width="1.8" height="1.5"/><rect x="77.1" y="55.6" width="1.5" height="0.9"/><rect x="42.6" y="46.7" width="1.6" height="1.7"/><rect x="117.5" y="51.6" width="1.7" height="1.7"/><rect x="108.1" y="53.1" width="1.3" height="1.2"/><rect x="42.8" y="48.5" width="1.7" height="1.8"/><rect x="81.0" y="51.0" width="1.2" height="1.1"/><rect x="107.0" y="51.5" width="2.1" height="0.8"/><rect x="57.5" y="52.2" width="1.3" height="1.6"/><rect x="109.5" y="56.7" width="1.6" height="0.6"/><rect x="83.8" y="52.5" width="1.4" height="0.9"/><rect x="97.5" y="56.5" width="0.8" height="1.4"/><rect x="63.2" y="52.2" width="2.0" height="1.8"/><rect x="90.8" y="48.6" width="2.1" height="0.8"/><rect x="64.4" y="55.6" width="1.1" height="0.9"/><rect x="121.9" y="56.9" width="1.1" height="1.1"/><rect x="54.1" y="47.9" width="1.0" height="1.8"/><rect x="33.5" y="49.0" width="0.9" height="0.7"/><rect x="78.9" y="54.7" width="1.9" height="1.4"/><rect x="108.5" y="46.6" width="1.1" height="1.8"/><rect x="32.5" y="49.4" width="1.4" height="0.9"/><rect x="80.9" y="47.0" width="1.0" height="1.7"/><rect x="40.1" y="56.5" width="0.9" height="1.8"/><rect x="94.0" y="53.6" width="0.8" height="0.7"/><rect x="102.6" y="48.4" width="0.9" height="1.6"/><rect x="114.3" y="47.0" width="2.1" height="1.2"/><rect x="64.3" y="47.7" width="1.2" height="1.8"/><rect x="54.0" y="47.9" width="0.8" height="0.8"/><rect x="61.3" y="56.6" width="0.7" height="0.8"/><rect x="120.8" y="57.5" width="2.2" height="0.9"/><rect x="61.5" y="57.0" width="1.4" height="1.4"/><rect x="57.3" y="46.7" width="1.2" height="1.5"/><rect x="104.9" y="52.8" width="1.3" height="1.2"/><rect x="70.4" y="52.4" width="1.9" height="0.8"/><rect x="85.8" y="56.8" width="2.0" height="0.8"/><rect x="123.3" y="55.7" width="0.9" height="0.9"/><rect x="46.0" y="47.1" width="2.2" height="1.1"/><rect x="114.1" y="47.8" width="0.6" height="1.6"/><rect x="106.1" y="57.4" width="1.7" height="1.2"/><rect x="103.3" y="47.5" width="1.5" height="1.1"/><rect x="40.4" y="53.1" width="1.1" height="1.2"/><rect x="63.4" y="50.0" width="1.2" height="1.3"/><rect x="125.0" y="56.8" width="2.0" height="1.6"/><rect x="54.6" y="57.2" width="1.0" height="0.7"/><rect x="76.3" y="54.6" width="1.1" height="1.4"/><rect x="54.2" y="57.1" width="1.3" height="1.2"/><rect x="79.4" y="56.1" width="2.2" height="1.2"/><rect x="70.3" y="53.3" width="0.7" height="1.1"/><rect x="111.5" y="55.1" width="0.7" height="1.6"/><rect x="64.5" y="57.3" width="1.2" height="0.9"/><rect x="81.2" y="56.2" width="1.3" height="1.6"/><rect x="97.7" y="50.5" width="1.1" height="1.2"/><rect x="66.0" y="50.6" width="1.6" height="1.7"/><rect x="84.8" y="48.1" width="1.0" height="1.0"/><rect x="87.9" y="48.0" width="0.7" height="1.0"/><rect x="54.2" y="46.8" width="1.5" height="1.7"/><rect x="79.7" y="54.6" width="1.9" height="1.6"/><rect x="118.2" y="51.4" width="1.7" height="0.7"/><rect x="114.8" y="50.7" width="1.4" height="1.7"/><rect x="54.6" y="48.6" width="1.9" height="1.3"/><rect x="34.1" y="46.8" width="1.2" height="0.6"/><rect x="110.0" y="48.5" width="1.0" height="1.1"/><rect x="77.4" y="51.3" width="1.6" height="1.4"/><rect x="69.8" y="47.6" width="2.2" height="1.4"/><rect x="34.0" y="51.4" width="1.8" height="1.8"/><rect x="32.2" y="46.6" width="1.4" height="1.1"/><rect x="116.3" y="55.6" width="1.1" height="1.1"/><rect x="84.7" y="56.2" width="0.9" height="1.1"/><rect x="34.5" y="53.6" width="0.6" height="1.7"/><rect x="78.7" y="52.8" width="0.7" height="0.9"/><rect x="73.1" y="55.9" width="1.5" height="0.9"/><rect x="125.2" y="53.8" width="1.4" height="0.8"/><rect x="55.8" y="56.4" width="0.8" height="1.2"/><rect x="88.4" y="50.4" width="1.8" height="1.7"/><rect x="112.5" y="54.6" width="0.9" height="0.7"/><rect x="69.4" y="49.9" width="0.9" height="1.6"/><rect x="47.4" y="55.6" width="2.1" height="0.7"/><rect x="118.2" y="50.9" width="0.9" height="0.8"/><rect x="29.3" y="52.0" width="1.2" height="1.6"/><rect x="110.1" y="47.1" width="1.2" height="1.1"/><rect x="43.5" y="49.3" width="1.0" height="1.4"/><rect x="60.0" y="47.7" width="1.0" height="1.1"/><rect x="82.8" y="49.2" width="1.7" height="0.9"/><rect x="93.6" y="53.2" width="0.9" height="1.5"/><rect x="65.5" y="52.4" width="1.6" height="1.4"/><rect x="70.4" y="47.1" width="1.9" height="1.6"/><rect x="75.3" y="52.9" width="1.0" height="1.7"/><rect x="95.1" y="48.9" width="1.9" height="1.8"/><rect x="60.6" y="57.5" width="1.4" height="0.8"/><rect x="98.3" y="50.2" width="1.8" height="1.3"/><rect x="36.4" y="52.3" width="2.0" height="1.2"/><rect x="80.2" y="56.0" width="1.3" height="1.2"/><rect x="84.7" y="55.6" width="0.9" height="0.7"/><rect x="102.8" y="52.6" width="1.1" height="1.7"/><rect x="115.3" y="52.5" width="2.2" height="1.6"/><rect x="101.4" y="49.7" width="0.6" height="1.4"/><rect x="100.1" y="50.4" width="1.4" height="1.3"/><rect x="50.9" y="54.2" width="1.5" height="1.1"/><rect x="36.6" y="52.6" width="1.1" height="1.5"/><rect x="43.0" y="50.8" width="0.9" height="1.1"/><rect x="84.0" y="47.7" width="0.7" height="1.2"/><rect x="46.0" y="52.1" width="0.9" height="0.7"/><rect x="80.1" y="56.7" width="2.0" height="1.2"/><rect x="65.8" y="47.2" width="1.0" height="1.0"/><rect x="121.1" y="47.8" width="2.1" height="1.2"/><rect x="69.6" y="49.4" width="2.1" height="0.8"/><rect x="83.5" y="52.1" width="0.9" height="0.9"/><rect x="125.5" y="55.2" width="1.8" height="1.7"/><rect x="35.5" y="54.2" width="1.8" height="0.9"/><rect x="71.9" y="57.2" width="1.1" height="1.5"/><rect x="42.3" y="53.8" width="1.0" height="1.2"/><rect x="63.3" y="56.1" width="1.8" height="1.2"/><rect x="95.3" y="51.2" width="1.9" height="0.9"/><rect x="80.7" y="52.9" width="1.2" height="0.7"/><rect x="42.8" y="53.5" width="0.9" height="1.5"/><rect x="76.7" y="57.0" width="2.0" height="1.5"/><rect x="63.3" y="47.0" width="1.5" height="1.5"/><rect x="119.0" y="48.7" width="0.9" height="1.8"/><rect x="100.6" y="51.8" width="1.8" height="0.8"/><rect x="80.7" y="53.9" width="1.6" height="0.8"/><rect x="39.4" y="53.4" width="2.0" height="0.8"/><rect x="26.2" y="47.4" width="1.9" height="1.1"/><rect x="71.8" y="57.4" width="1.6" height="0.9"/><rect x="96.6" y="46.5" width="1.1" height="1.4"/><rect x="42.8" y="46.9" width="1.4" height="1.0"/><rect x="124.1" y="47.6" width="1.9" height="1.1"/><rect x="107.2" y="51.4" width="1.7" height="1.0"/><rect x="48.3" y="51.5" width="1.9" height="1.0"/><rect x="48.8" y="51.1" width="0.8" height="1.0"/><rect x="83.6" y="52.5" width="1.6" height="0.9"/><rect x="28.0" y="46.8" width="1.1" height="0.8"/><rect x="83.3" y="49.4" width="1.8" height="1.3"/><rect x="92.7" y="54.6" width="1.4" height="1.1"/><rect x="56.8" y="47.2" width="1.9" height="1.2"/><rect x="35.6" y="56.7" width="1.5" height="1.3"/><rect x="70.0" y="47.9" width="2.2" height="0.8"/><rect x="62.7" y="57.5" width="0.8" height="1.2"/><rect x="74.2" y="49.2" width="2.1" height="1.1"/><rect x="26.7" y="51.7" width="0.6" height="1.5"/><rect x="113.7" y="56.5" width="0.7" height="1.4"/><rect x="56.4" y="51.7" width="1.1" height="1.0"/><rect x="39.0" y="53.4" width="0.7" height="1.8"/><rect x="29.9" y="57.1" width="0.9" height="0.7"/><rect x="101.1" y="52.3" width="1.8" height="1.2"/><rect x="89.5" y="47.4" width="1.7" height="1.2"/><rect x="123.2" y="46.6" width="0.7" height="1.4"/><rect x="119.5" y="51.1" width="1.7" height="1.3"/><rect x="65.2" y="51.6" width="1.6" height="0.6"/><rect x="56.5" y="54.6" width="1.0" height="1.2"/><rect x="51.6" y="50.4" width="1.6" height="1.5"/><rect x="122.6" y="51.7" width="0.9" height="1.0"/><rect x="31.4" y="49.1" width="1.5" height="1.3"/><rect x="50.0" y="48.5" width="0.8" height="0.8"/><rect x="76.4" y="49.3" width="2.0" height="1.3"/><rect x="60.0" y="51.2" width="0.7" height="1.5"/><rect x="101.7" y="50.5" width="1.8" height="0.9"/><rect x="47.8" y="49.0" width="0.9" height="1.3"/><rect x="90.7" y="54.5" width="0.8" height="1.5"/><rect x="74.0" y="50.7" width="1.4" height="1.1"/><rect x="45.8" y="50.8" width="1.6" height="1.5"/><rect x="118.4" y="48.6" width="2.0" height="1.6"/><rect x="97.9" y="57.3" width="0.8" height="1.5"/><rect x="116.8" y="47.8" width="1.6" height="1.7"/><rect x="55.2" y="55.9" width="2.1" height="1.1"/><rect x="40.2" y="48.9" width="1.9" height="1.1"/><rect x="57.5" y="51.4" width="2.1" height="0.9"/><rect x="27.4" y="56.9" width="1.1" height="1.1"/><rect x="124.6" y="49.6" width="0.7" height="1.7"/><rect x="50.3" y="48.9" width="2.1" height="0.9"/><rect x="117.0" y="50.2" width="1.1" height="0.9"/><rect x="80.5" y="52.7" width="1.2" height="1.2"/><rect x="55.8" y="55.7" width="2.1" height="1.5"/><rect x="108.7" y="47.3" width="1.0" height="0.8"/><rect x="41.2" y="57.2" width="2.0" height="1.7"/><rect x="82.1" y="47.8" width="1.3" height="0.7"/><rect x="117.3" y="49.4" width="1.1" height="1.7"/><rect x="45.9" y="56.6" width="1.1" height="1.4"/><rect x="36.3" y="56.4" width="1.2" height="1.0"/><rect x="91.9" y="53.0" width="1.0" height="0.7"/><rect x="83.9" y="46.8" width="2.0" height="1.0"/><rect x="42.7" y="50.1" width="0.8" height="1.0"/><rect x="80.6" y="51.0" width="1.1" height="0.9"/><rect x="74.9" y="55.1" width="1.3" height="1.5"/><rect x="74.5" y="47.8" width="0.9" height="1.6"/><rect x="74.1" y="50.7" width="1.4" height="1.6"/><rect x="63.6" y="50.5" width="1.2" height="0.6"/><rect x="80.8" y="51.8" width="1.4" height="1.1"/><rect x="73.5" y="54.4" width="0.9" height="1.8"/><rect x="37.1" y="56.0" width="0.9" height="1.6"/><rect x="51.9" y="47.4" width="1.5" height="1.6"/><rect x="111.3" y="56.1" width="2.2" height="0.7"/><rect x="64.0" y="47.7" width="1.8" height="1.1"/><rect x="101.0" y="55.3" width="2.2" height="1.4"/><rect x="114.3" y="52.5" width="0.7" height="1.7"/><rect x="34.7" y="47.4" width="1.9" height="0.9"/><rect x="92.7" y="46.8" width="0.9" height="1.5"/><rect x="29.3" y="52.1" width="2.1" height="0.9"/><rect x="97.0" y="54.7" width="1.6" height="1.5"/><rect x="96.4" y="46.7" width="0.9" height="1.2"/><rect x="123.9" y="48.9" width="1.5" height="0.8"/><rect x="111.5" y="51.4" width="1.4" height="1.4"/><rect x="39.4" y="54.5" width="1.9" height="1.6"/><rect x="54.1" y="49.1" width="0.9" height="1.7"/><rect x="70.0" y="50.8" width="1.4" height="1.4"/><rect x="57.8" y="50.2" width="1.8" height="1.5"/><rect x="55.5" y="47.3" width="2.1" height="1.5"/></g>
<rect x="41.5" y="21" width="69" height="14.5" fill="none" stroke="#fff" stroke-width="0.9"/>
<g clip-path="url(#c1)" stroke="#fff" stroke-width="0.8"><path d="M20 21l20 14.5"/><path d="M27 21l20 14.5"/><path d="M34 21l20 14.5"/><path d="M41 21l20 14.5"/><path d="M48 21l20 14.5"/><path d="M55 21l20 14.5"/><path d="M62 21l20 14.5"/><path d="M69 21l20 14.5"/><path d="M76 21l20 14.5"/><path d="M83 21l20 14.5"/><path d="M90 21l20 14.5"/><path d="M97 21l20 14.5"/><path d="M104 21l20 14.5"/><path d="M111 21l20 14.5"/></g>
<rect x="38" y="35.5" width="76.5" height="7.5" fill="none" stroke="#fff" stroke-width="0.9"/>
<g clip-path="url(#c2)" stroke="#fff" stroke-width="0.7"><path d="M28 35.5l10 7.5"/><path d="M32 35.5l10 7.5"/><path d="M36 35.5l10 7.5"/><path d="M40 35.5l10 7.5"/><path d="M44 35.5l10 7.5"/><path d="M48 35.5l10 7.5"/><path d="M52 35.5l10 7.5"/><path d="M56 35.5l10 7.5"/><path d="M60 35.5l10 7.5"/><path d="M64 35.5l10 7.5"/><path d="M68 35.5l10 7.5"/><path d="M72 35.5l10 7.5"/><path d="M76 35.5l10 7.5"/><path d="M80 35.5l10 7.5"/><path d="M84 35.5l10 7.5"/><path d="M88 35.5l10 7.5"/><path d="M92 35.5l10 7.5"/><path d="M96 35.5l10 7.5"/><path d="M100 35.5l10 7.5"/><path d="M104 35.5l10 7.5"/><path d="M108 35.5l10 7.5"/><path d="M112 35.5l10 7.5"/><path d="M116 35.5l10 7.5"/></g>
<rect x="71.5" y="0" width="9" height="21" fill="none" stroke="#fff" stroke-width="0.9"/>
<g clip-path="url(#c3)" stroke="#fff" stroke-width="0.8"><path d="M71 -6l10 7"/><path d="M71 0l10 7"/><path d="M71 6l10 7"/><path d="M71 12l10 7"/><path d="M71 18l10 7"/></g>
<path d="M59.4 66V1.5h8V66" fill="none" stroke="#e8913a" stroke-width="0.9"/>
<path d="M54.9 20.5l1.5-4.5 1-2h12l1 2 1.5 4.5z" fill="none" stroke="#e8913a" stroke-width="1"/>
<path d="M85.5 66V1.5h8V66" fill="none" stroke="#e8913a" stroke-width="0.9"/>
<path d="M81.0 20.5l1.5-4.5 1-2h12l1 2 1.5 4.5z" fill="none" stroke="#e8913a" stroke-width="1"/>
</svg>
<div class="a" style="left:1142px;top:822px;width:75px;height:28px;background:#fff;border:1px solid #dadada;border-radius:4px;font-size:13px;color:#222;text-align:center;line-height:27px;text-indent:-2px">导入</div>
<div class="hd" style="left:1202px;top:608.5px">锚栓</div>
<div class="sep" style="left:1198px;top:626px;width:23px"></div>
<div class="lb" style="left:1205px;top:639.5px">迎风</div>
<div class="lb" style="left:1205px;top:672.5px">背风</div>
<div class="lb" style="left:1205px;top:705.5px">(用</div>
<div class="a" style="left:1221px;top:595px;width:2px;height:292px;background:#f0f0f0"></div>
<div class="a" style="left:171px;top:871px;width:1050px;height:14px;background:#f0f0f0"></div>
<div class="a" style="left:187px;top:871px;width:817px;height:14px;background:#c8c8c8"></div>
<svg class="a" style="left:175px;top:873px" width="8" height="10" viewBox="0 0 8 10"><path d="M6 1L2 5l4 4" fill="none" stroke="#444" stroke-width="1.9"/></svg>
<svg class="a" style="left:1209px;top:873px" width="8" height="10" viewBox="0 0 8 10"><path d="M2 1l4 4-4 4" fill="none" stroke="#444" stroke-width="1.9"/></svg>
<div class="a" style="left:0;top:0;width:1px;height:889px;background:#2b4f80"></div>
<div class="a" style="left:1221px;top:35px;width:2px;height:28px;background:#5577b0"></div>
<div class="a" style="left:1223px;top:35px;width:2px;height:854px;background:#2b4f80"></div>
<div class="a" style="left:0;top:887px;width:1225px;height:2px;background:#2b4f80"></div><!--/BOTTOM-->
</body></html>
